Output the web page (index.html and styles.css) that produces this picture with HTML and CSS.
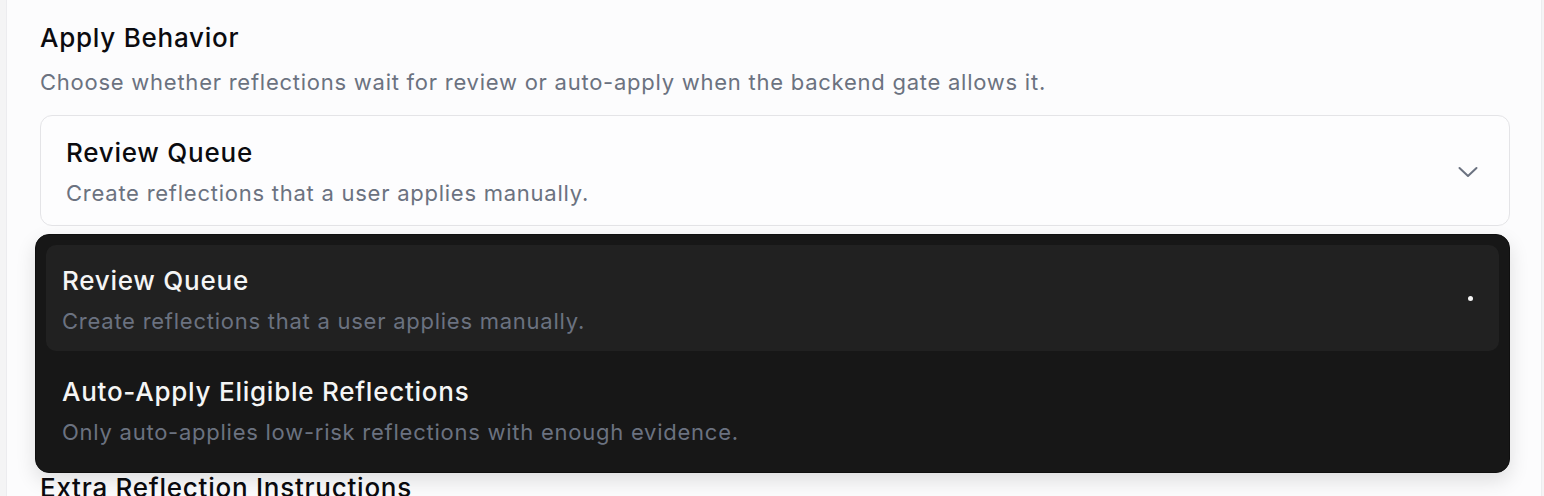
FILE: index.html
```html
<!DOCTYPE html>
<html lang="en">
<head>
    <meta charset="UTF-8">
    <title>Reflection Settings</title>
    <link rel="stylesheet" href="styles.css">
</head>
<body>
    <div class="settings-panel">
        <section class="field">
            <h3 class="field-title">Apply Behavior</h3>
            <p class="field-hint">Choose whether reflections wait for review or auto-apply when the backend gate allows it.</p>
            <div class="select">
                <button class="select-trigger" type="button" aria-expanded="true">
                    <span class="option-text">
                        <span class="option-label">Review Queue</span>
                        <span class="option-desc">Create reflections that a user applies manually.</span>
                    </span>
                    <svg class="chevron" width="20" height="12" viewBox="0 0 20 12" fill="none">
                        <path d="M1.5 2 L10 10 L18.5 2" stroke="currentColor" stroke-width="2" stroke-linecap="round" stroke-linejoin="round"/>
                    </svg>
                </button>
                <ul class="select-menu" role="listbox">
                    <li class="menu-item active" role="option" aria-selected="true">
                        <span class="option-text">
                            <span class="option-label">Review Queue</span>
                            <span class="option-desc">Create reflections that a user applies manually.</span>
                        </span>
                        <span class="check-dot"></span>
                    </li>
                    <li class="menu-item" role="option">
                        <span class="option-text">
                            <span class="option-label">Auto-Apply Eligible Reflections</span>
                            <span class="option-desc">Only auto-applies low-risk reflections with enough evidence.</span>
                        </span>
                    </li>
                </ul>
            </div>
        </section>
        <section class="field">
            <h3 class="field-title">Extra Reflection Instructions</h3>
        </section>
    </div>
</body>
</html>
```

FILE: styles.css
```css
body {
    margin: 0;
    background: #f4f4f5;
    font-family: Inter, "Noto Sans", Arial, sans-serif;
    color: #0b0b0f;
    overflow: hidden;
}
.settings-panel {
    margin: 0 2px 0 6px;
    min-height: 100vh;
    background: #fcfcfd;
    border-left: 1px solid #ececef;
    border-right: 1px solid #ececef;
    padding: 21px 31px 0 33px;
}
.field { margin-bottom: 245px; }
.field-title {
    margin: 0;
    font-size: 26px;
    line-height: 34px;
    font-weight: 500;
    letter-spacing: 0.75px;
    color: #0b0b0f;
}
.field-hint {
    margin: 12px 0 18px;
    font-size: 22px;
    line-height: 30px;
    letter-spacing: 0.75px;
    color: #6b7280;
}
.select { position: relative; }
.select-trigger {
    width: 100%;
    display: flex;
    align-items: center;
    justify-content: space-between;
    text-align: left;
    font: inherit;
    background: #fdfdfe;
    border: 1px solid #e4e4e7;
    border-radius: 12px;
    padding: 20px 31px 17px 25px;
    cursor: pointer;
}
.option-text {
    display: flex;
    flex-direction: column;
}
.option-label {
    font-size: 26px;
    line-height: 34px;
    font-weight: 500;
    letter-spacing: 0.75px;
    color: #0b0b0f;
}
.option-desc {
    margin-top: 8px;
    font-size: 22px;
    line-height: 30px;
    letter-spacing: 0.75px;
    color: #6b7280;
}
.chevron { color: #6b7280; }
.select-menu {
    position: absolute;
    top: 119px;
    left: -5px;
    right: 0;
    margin: 0;
    padding: 10px;
    list-style: none;
    background: #171717;
    border: 1px solid #0f0f0f;
    border-radius: 14px;
    box-shadow: 0 8px 20px rgba(0, 0, 0, 0.12);
    z-index: 10;
}
.menu-item {
    display: flex;
    align-items: center;
    justify-content: space-between;
    padding: 19px 26px 15px 16px;
    border-radius: 10px;
}
.menu-item + .menu-item { padding-top: 24px; }
.menu-item.active { background: #212121; }
.menu-item .option-label { color: #f5f5f5; }
.menu-item .option-desc { margin-top: 8px; color: #6b7280; }
.check-dot {
    width: 5px;
    height: 5px;
    margin-bottom: 4px;
    border-radius: 50%;
    background: #f5f5f5;
}
```
